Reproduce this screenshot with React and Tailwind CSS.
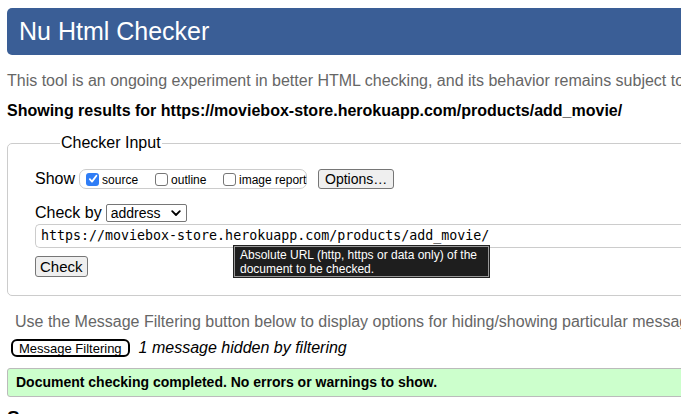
import React from "react";

function Box({ checked }) {
  if (checked) {
    return (
      <span className="inline-flex shrink-0 w-[13px] h-[13px] rounded-[3px] bg-[#2f7df6] items-center justify-center">
        <svg width="10" height="10" viewBox="0 0 10 10">
          <path d="M1.8 5.2 L4 7.6 L8.4 1.8" fill="none" stroke="#fff" strokeWidth="1.8" strokeLinecap="round" strokeLinejoin="round" />
        </svg>
      </span>
    );
  }
  return <span className="inline-block shrink-0 w-[13px] h-[13px] rounded-[3px] border border-[#767676] bg-white" />;
}

export default function App() {
  const sans = { fontFamily: "'Liberation Sans', Arial, sans-serif" };
  return (
    <div className="w-[681px] h-[414px] overflow-hidden bg-white text-black" style={sans}>
      <div className="w-[820px] pt-[8px] pl-[7px]">
        <div className="h-[47px] bg-[#3a5e96] rounded-[5px] flex items-center pl-[12px]">
          <h1 className="text-white text-[25px] leading-none">Nu Html Checker</h1>
        </div>

        <p className="mt-[17px] text-[16px] leading-[18px] text-[#666] whitespace-nowrap">
          This tool is an ongoing experiment in better HTML checking, and its behavior remains subject to change
        </p>
        <p className="mt-[12px] text-[16px] leading-[18px] font-bold whitespace-nowrap">
          Showing results for https://moviebox-store.herokuapp.com/products/add_movie/
        </p>

        <fieldset className="relative mt-[13px] border border-[#ccc] rounded-[5px] pl-[27px] pb-[16px]">
          <legend className="ml-[25px] px-[1px] text-[16px] leading-[20px]">Checker Input</legend>

          <div className="mt-[14px] h-[24px] flex items-center">
            <span className="text-[16px] mr-[4px]">Show</span>
            <div className="h-[20px] w-[228px] shrink-0 border border-[#ccc] rounded-[7px] flex items-center pl-[6px] text-[12px] whitespace-nowrap">
              <span className="w-[69px] shrink-0 flex items-center">
                <Box checked />
                <span className="ml-[3px] mt-[2px]">source</span>
              </span>
              <span className="w-[68px] shrink-0 flex items-center">
                <Box />
                <span className="ml-[3px] mt-[2px]">outline</span>
              </span>
              <span className="shrink-0 flex items-center">
                <Box />
                <span className="ml-[3px] mt-[2px]">image report</span>
              </span>
            </div>
            <button className="ml-[11px] h-[20px] px-[6px] border border-[#767676] rounded-[3px] bg-[#efefef] text-[14px] leading-none whitespace-nowrap">
              Options…
            </button>
          </div>

          <div className="mt-[12px] h-[20px] flex items-center">
            <span className="text-[16px] mr-[4px]">Check by</span>
            <div className="h-[18px] w-[81px] border border-[#767676] rounded-[2px] flex items-center justify-between pl-[4px] pr-[5px] text-[14px]">
              <span>address</span>
              <svg width="10" height="7" viewBox="0 0 10 7">
                <path d="M1.2 1.2 L5 5 L8.8 1.2" fill="none" stroke="#000" strokeWidth="1.8" strokeLinecap="round" strokeLinejoin="round" />
              </svg>
            </div>
          </div>

          <div className="mt-[1px] h-[24px] border border-r-0 border-[#ccc] rounded-l-[5px] flex items-center pl-[5px] text-[13.3px] whitespace-nowrap" style={{ fontFamily: "'DejaVu Sans Mono', Menlo, monospace" }}>
            https://moviebox-store.herokuapp.com/products/add_movie/
          </div>

          <button className="mt-[8px] h-[21px] px-[4px] border border-[#767676] rounded-[3px] bg-[#efefef] text-[15px] leading-none">
            Check
          </button>

          <div className="absolute left-[226px] top-[93px] w-[255px] h-[31px] bg-[#1e1e1e] border border-[#999] outline outline-1 outline-[#222] text-white text-[12px] leading-[14px] px-[5px] pt-[1px]">
            Absolute URL (http, https or data only) of the<br />document to be checked.
          </div>
        </fieldset>

        <p className="mt-[16px] ml-[8px] text-[16px] leading-[20px] text-[#666] whitespace-nowrap">
          Use the Message Filtering button below to display options for hiding/showing particular messages, and to see total counts of errors and warnings.
        </p>

        <div className="mt-[6px] ml-[4px] h-[20px] flex items-center">
          <button className="h-[18px] px-[6px] border-2 border-black rounded-[6px] bg-white text-[13px] leading-none">
            Message Filtering
          </button>
          <span className="ml-[9px] text-[16px] italic">1 message hidden by filtering</span>
        </div>

        <div className="mt-[10px] h-[29px] bg-[#ccffcc] border border-[#bbb] rounded-[3px] flex items-center pl-[8px] text-[14px] font-bold whitespace-nowrap">
          Document checking completed. No errors or warnings to show.
        </div>

        <h2 className="mt-[10px] text-[19px] font-bold leading-[22px]">Source</h2>
      </div>
    </div>
  );
}
